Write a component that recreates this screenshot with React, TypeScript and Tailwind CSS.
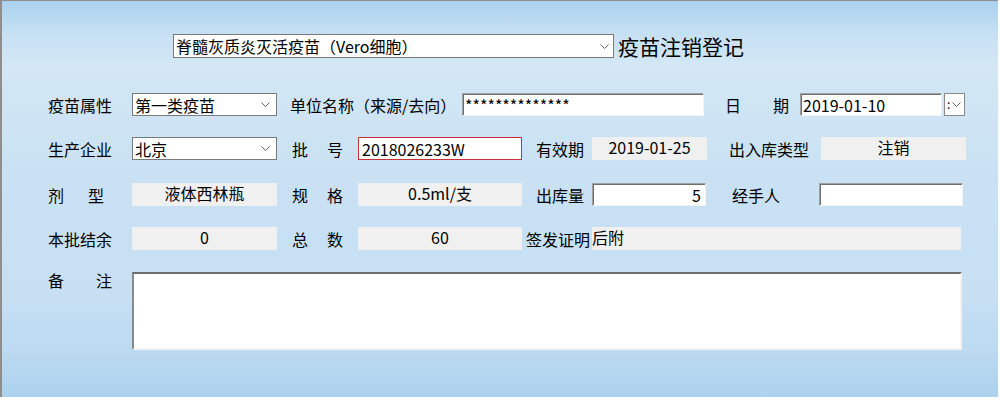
import React from "react";

function Chevron() {
  return (
    <svg width="9" height="5" viewBox="0 0 9 5" className="shrink-0">
      <path d="M0.5 0.5 L4.5 4.5 L8.5 0.5" fill="none" stroke="#5f5f5f" strokeWidth="1" />
    </svg>
  );
}

function Combo({ value, w }: { value: string; w: string }) {
  return (
    <div className={`${w} flex h-[23px] shrink-0 items-center justify-between border border-[#7a7a7a] bg-white pl-[2px] pr-[6px]`}>
      <span className="whitespace-nowrap">{value}</span>
      <Chevron />
    </div>
  );
}

function TextBox({ value = "", w, right = false }: { value?: string; w: string; right?: boolean }) {
  return (
    <div
      className={`${w} flex h-[23px] shrink-0 items-center border border-[#a0a0a0] border-b-[#f4f4f4] border-r-[#f4f4f4] bg-white px-[2px] shadow-[inset_1px_1px_0_#6e6e6e] ${right ? "justify-end pr-[4px]" : ""}`}
    >
      <span className="whitespace-nowrap">{value}</span>
    </div>
  );
}

function ReadOnly({ value, w, left = false }: { value: string; w: string; left?: boolean }) {
  return (
    <div className={`${w} flex h-[23px] shrink-0 items-start bg-[#f0f0f0] pt-[1px] ${left ? "justify-start" : "justify-center"}`}>
      <span className="whitespace-nowrap leading-[18px]">{value}</span>
    </div>
  );
}

function Spread({ a, b, w }: { a: string; b: string; w: string }) {
  return (
    <div className={`${w} flex shrink-0 justify-between`}>
      <span>{a}</span>
      <span>{b}</span>
    </div>
  );
}

export default function App() {
  return (
    <div className="h-[397px] w-[998px] border-l-2 border-t border-[#8e8e8e] bg-[linear-gradient(180deg,#a9d1ee_0%,#c6e0f3_8%,#d3e7f5_16%,#c9e1f3_45%,#c6dff3_75%,#bcdaf1_88%,#acd2ee_100%)] pl-[46px] pt-[33px] font-['Noto_Sans_CJK_SC',sans-serif] text-[16px] leading-[20px] text-black">
      {/* title row */}
      <div className="flex h-[24px] items-center">
        <div className="ml-[125px] flex h-[24px] w-[441px] items-center justify-between border border-[#7a7a7a] bg-white pl-[2px] pr-[4px]">
          <span className="whitespace-nowrap">脊髓灰质炎灭活疫苗（Vero细胞）</span>
          <Chevron />
        </div>
        <span className="ml-[4px] text-[21px] leading-[24px]">疫苗注销登记</span>
      </div>

      {/* row 1 */}
      <div className="mt-[35px] flex h-[23px] items-center">
        <span className="w-[84px] shrink-0">疫苗属性</span>
        <Combo value="第一类疫苗" w="w-[145px]" />
        <span className="ml-[13px] w-[172px] shrink-0 whitespace-nowrap">单位名称（来源/去向）</span>
        <TextBox value="**************" w="w-[242px]" />
        <Spread a="日" b="期" w="ml-[21px] w-[64px]" />
        <TextBox value="2019-01-10" w="ml-[11px] w-[142px]" />
        <div className="ml-[2px] flex h-[23px] w-[21px] shrink-0 items-center justify-between border border-[#8a8a8a] bg-white pl-[2px] pr-[3px] text-[12px] leading-none">
          <span className="-mt-[2px]">:</span>
          <Chevron />
        </div>
      </div>

      {/* row 2 */}
      <div className="mt-[21px] flex h-[23px] items-center">
        <span className="w-[84px] shrink-0">生产企业</span>
        <Combo value="北京" w="w-[145px]" />
        <Spread a="批" b="号" w="ml-[15px] w-[51px]" />
        <div className="ml-[15px] flex h-[23px] w-[164px] shrink-0 items-center border border-[#c5303a] bg-white px-[3px]">
          <span>2018026233W</span>
        </div>
        <span className="ml-[14px] w-[56px] shrink-0">有效期</span>
        <ReadOnly value="2019-01-25" w="w-[115px]" />
        <span className="ml-[22px] w-[92px] shrink-0 whitespace-nowrap">出入库类型</span>
        <ReadOnly value="注销" w="w-[145px]" />
      </div>

      {/* row 3 */}
      <div className="mt-[23px] flex h-[23px] items-center">
        <div className="flex w-[84px] shrink-0">
          <Spread a="剂" b="型" w="w-[56px]" />
        </div>
        <ReadOnly value="液体西林瓶" w="w-[145px]" />
        <Spread a="规" b="格" w="ml-[15px] w-[51px]" />
        <ReadOnly value="0.5ml/支" w="ml-[15px] w-[164px]" />
        <span className="ml-[14px] w-[56px] shrink-0">出库量</span>
        <TextBox value="5" w="w-[114px]" right />
        <span className="ml-[26px] w-[87px] shrink-0">经手人</span>
        <TextBox w="w-[144px]" />
      </div>

      {/* row 4 */}
      <div className="mt-[21px] flex h-[23px] items-center">
        <span className="w-[84px] shrink-0">本批结余</span>
        <ReadOnly value="0" w="w-[145px]" />
        <Spread a="总" b="数" w="ml-[15px] w-[51px]" />
        <ReadOnly value="60" w="ml-[15px] w-[164px]" />
        <span className="ml-[4px] w-[66px] shrink-0 whitespace-nowrap">签发证明</span>
        <ReadOnly value="后附" w="w-[369px]" left />
      </div>

      {/* row 5 */}
      <div className="mt-[22px] flex items-start">
        <div className="-mt-[2px] flex w-[84px] shrink-0">
          <Spread a="备" b="注" w="w-[64px]" />
        </div>
        <div className="h-[78px] w-[830px] shrink-0 border-2 border-[#6e6e6e] border-b-[#f2f2f2] border-r-[#f2f2f2] border-l-[#8a8a8a] bg-white" />
      </div>
    </div>
  );
}
